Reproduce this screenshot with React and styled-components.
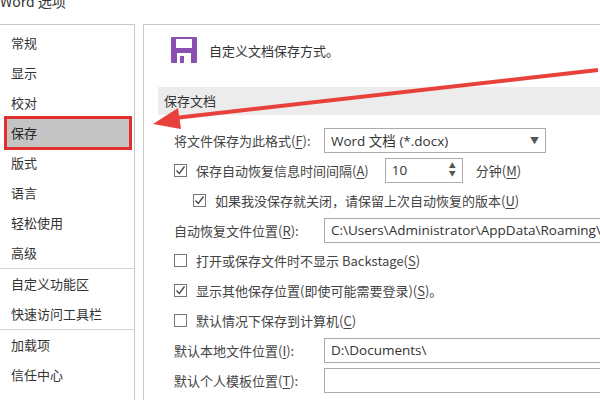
import React from "react";
import styled, { createGlobalStyle } from "styled-components";

const G = createGlobalStyle`
  body{margin:0;background:#fff;font-family:"Microsoft YaHei","Noto Sans CJK SC",sans-serif;color:#444;}
  *{box-sizing:border-box;}
`;
const Page = styled.div`position:relative;width:600px;height:400px;overflow:hidden;background:#fff;`;
const Title = styled.div`position:absolute;top:-9px;left:0;font-size:14px;color:#333;`;
const Body = styled.div`display:flex;gap:8px;padding-top:24px;height:400px;`;
const Side = styled.div`width:135px;flex-shrink:0;border:1px solid #c8c8c8;border-left:none;border-bottom:none;padding-top:3px;`;
const Item = styled.div`
  height:30px;line-height:30px;padding-left:11px;font-size:13px;color:#333;
  ${p=>p.sel&&`background:#c4c4c4;color:#222;outline:3px solid #e03030;outline-offset:-3px;margin:0 2px 0 4px;padding-left:7px;height:34px;line-height:34px;margin-top:-2px;margin-bottom:-2px;`}
`;
const Sep = styled.div`height:1px;background:#d4d4d4;`;
const Main = styled.div`flex:1;min-width:0;border:1px solid #c8c8c8;border-right:none;border-bottom:none;padding:10px 0 0 14px;`;
const Head = styled.div`display:flex;align-items:center;gap:11px;padding-left:12px;font-size:13px;color:#333;height:30px;`;
const Section = styled.div`margin-top:22px;background:#ececec;height:28px;line-height:28px;padding-left:6px;font-size:13px;color:#333;`;
const Rows = styled.div`padding:10px 0 0 16px;display:flex;flex-direction:column;`;
const Row = styled.div`display:flex;align-items:center;height:${p=>p.h||30}px;font-size:13px;color:#444;padding-left:${p=>p.ind||0}px;white-space:nowrap;`;
const Label = styled.span`width:150px;flex-shrink:0;`;
const Box = styled.div`height:25px;flex-shrink:0;border:1px solid #ababab;display:flex;align-items:center;padding:0 6px;font-size:13.5px;color:#333;font-family:"Segoe UI","Open Sans","Noto Sans CJK SC",sans-serif;width:${p=>p.w}px;justify-content:space-between;white-space:nowrap;overflow:hidden;`;
const Check = styled.span`width:13px;height:13px;flex-shrink:0;border:1px solid #777;margin-right:9px;display:inline-flex;align-items:center;justify-content:center;background:#fff;`;
const U = styled.u`text-underline-offset:2px;`;

const Cb = ({c}) => <Check>{c && <svg width="11" height="11" viewBox="0 0 11 11"><path d="M1.5 5.5l2.8 3 5.2-7" fill="none" stroke="#444" strokeWidth="1.3"/></svg>}</Check>;

export default function App(){
  const items=["常规","显示","校对","保存","版式","语言","轻松使用","高级"];
  return <Page><G/>
    <Title>Word 选项</Title>
    <Body>
      <Side>
        {items.map(t=><Item key={t} sel={t==="保存"}>{t}</Item>)}
        <Sep/>
        <Item>自定义功能区</Item><Item>快速访问工具栏</Item>
        <Sep/>
        <Item>加载项</Item><Item>信任中心</Item>
      </Side>
      <Main>
        <Head>
          <svg width="28" height="28" viewBox="0 0 28 28"><rect x="1" y="1" width="26" height="26" rx="1" fill="#8b4fb0"/><rect x="6" y="3" width="16" height="9" fill="#fff"/><rect x="7" y="17" width="14" height="10" fill="#fff"/><rect x="10" y="20" width="4" height="7" fill="#8b4fb0"/></svg>
          自定义文档保存方式。
        </Head>
        <Section>保存文档</Section>
        <Rows>
          <Row><Label>将文件保存为此格式(<U>F</U>):</Label><Box w={222}>Word 文档 (*.docx)<span style={{fontSize:9,color:"#555"}}>▼</span></Box></Row>
          <Row><Cb c/>保存自动恢复信息时间间隔(<U>A</U>)<span style={{width:16}}/><Box w={78}>10<span style={{fontSize:7,lineHeight:"8px",color:"#555"}}>▲<br/>▼</span></Box><span style={{marginLeft:13}}>分钟(<U>M</U>)</span></Row>
          <Row ind={19}><Cb c/>如果我没保存就关闭，请保留上次自动恢复的版本(<U>U</U>)</Row>
          <Row><Label>自动恢复文件位置(<U>R</U>):</Label><Box w={300}>C:\Users\Administrator\AppData\Roaming\</Box></Row>
          <Row><Cb/>打开或保存文件时不显示 Backstage(<U>S</U>)</Row>
          <Row><Cb c/>显示其他保存位置(即使可能需要登录)(<U>S</U>)。</Row>
          <Row><Cb/>默认情况下保存到计算机(<U>C</U>)</Row>
          <Row><Label>默认本地文件位置(<U>I</U>):</Label><Box w={300}>D:\Documents\</Box></Row>
          <Row><Label>默认个人模板位置(<U>T</U>):</Label><Box w={300}></Box></Row>
        </Rows>
      </Main>
    </Body>
    <svg width="600" height="400" style={{position:"absolute",left:0,top:0,pointerEvents:"none"}}>
      <path d="M598 70 L175 118" stroke="#e8413c" strokeWidth="4" fill="none"/>
      <path d="M153 124 L178 108 L181 129 Z" fill="#e8413c"/>
    </svg>
  </Page>;
}
